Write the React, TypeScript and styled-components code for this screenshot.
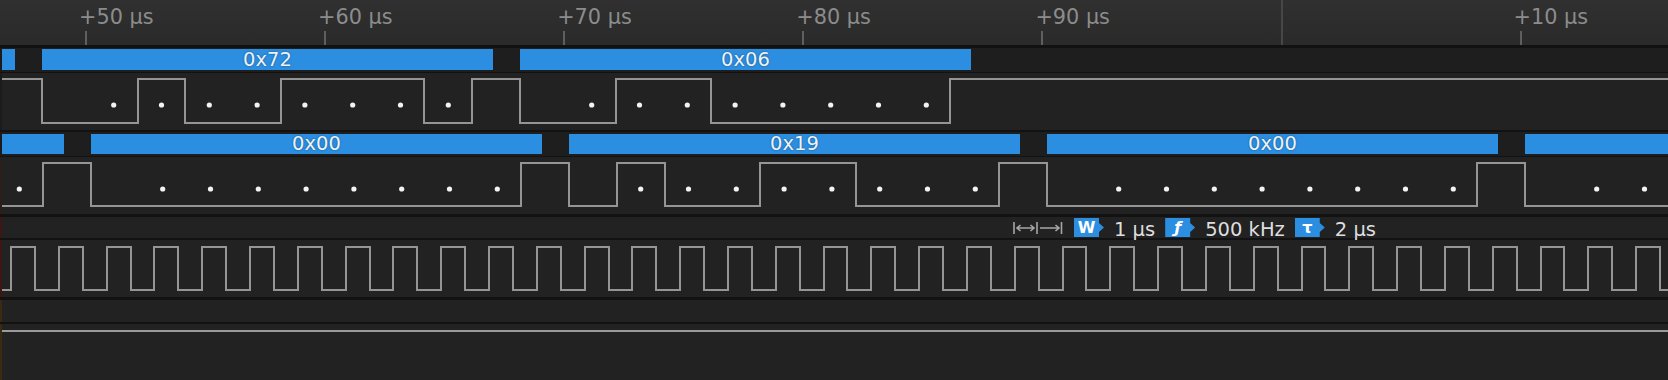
import styled, { createGlobalStyle } from "styled-components";

const WIDTH = 1668;
const BIT = 47.8; // one bit / one clock period in px (2 µs)
const FRAME = BIT * 10; // start + 8 data + stop
const TICK0 = 86;
const TICK_STEP = 239.1;

const GlobalStyle = createGlobalStyle`
  html, body {
    margin: 0;
    padding: 0;
    background: #222;
  }
  body {
    font-family: "DejaVu Sans", "Liberation Sans", sans-serif;
    overflow: hidden;
  }
`;

const Screen = styled.div`
  width: 1668px;
  height: 380px;
  display: flex;
  flex-direction: column;
  background: #222;
  overflow: hidden;
`;

const Ruler = styled.div`
  position: relative;
  flex: none;
  height: 45px;
  background: linear-gradient(#303030, #2a2a2a);
  border-bottom: 3px solid #111;
`;

const Tick = styled.div<{ $major?: boolean }>`
  position: absolute;
  bottom: 0;
  width: 2px;
  margin-left: -1px;
  height: ${(p) => (p.$major ? "45px" : "14px")};
  background: ${(p) => (p.$major ? "#474747" : "#5f5f5f")};
`;

const TickLabel = styled.span`
  position: absolute;
  top: 7px;
  font-size: 20.8px;
  line-height: 21px;
  color: #8c8c8c;
  white-space: nowrap;
`;

const Lane = styled.div<{ $height: number; $rule?: number; $strip?: string; $tone?: string }>`
  position: relative;
  flex: none;
  height: ${(p) => p.$height}px;
  background: ${(p) => p.$tone ?? "#222"};
  border-bottom: ${(p) => p.$rule ?? 0}px solid #121212;
  overflow: visible;

  &::before {
    content: "";
    position: absolute;
    left: 0;
    top: 0;
    bottom: 0;
    width: 2px;
    background: ${(p) => p.$strip ?? "#1b1b1b"};
    z-index: 3;
  }
`;

const TailLane = styled(Lane)`
  flex: 1;
`;

const Segment = styled.div<{ $top: number; $h: number }>`
  position: absolute;
  top: ${(p) => p.$top}px;
  height: ${(p) => p.$h}px;
  background: #2b8ee0;
  color: #eef3f8;
  font-size: 19.5px;
  line-height: ${(p) => p.$h}px;
  text-align: center;
  text-shadow: 0 0 2px rgba(0, 0, 0, 0.45);
  white-space: nowrap;
`;

const Trace = styled.svg`
  display: block;
  overflow: visible;
`;

const Note = styled.div`
  position: absolute;
  top: 1px;
  display: flex;
  align-items: flex-start;
  gap: 10px;
  z-index: 2;
`;

const Badge = styled.span<{ $italic?: boolean }>`
  display: inline-flex;
  justify-content: center;
  align-items: center;
  box-sizing: border-box;
  width: 30px;
  height: 19px;
  padding-right: 5px;
  background: #2b8ee0;
  color: #fff;
  font-size: 16px;
  font-weight: bold;
  font-style: ${(p) => (p.$italic ? "italic" : "normal")};
  line-height: 19px;
  clip-path: polygon(0 0, 25px 0, 25px 5px, 30px 9.5px, 25px 14px, 25px 100%, 0 100%);
`;

const Reading = styled.span`
  margin-top: 2px;
  font-size: 19.5px;
  line-height: 19px;
  color: #dedede;
  white-space: nowrap;
`;

const MeasureIcon = styled.svg`
  margin-top: 3px;
  margin-right: 1px;
  display: block;
`;

type Frame = { start: number; value: number };

const laneA: Frame[] = [
  { start: 42 - FRAME, value: 0xff },
  { start: 42, value: 0x72 },
  { start: 42 + FRAME, value: 0x06 },
];

const laneB: Frame[] = [
  { start: 91 - FRAME, value: 0x00 },
  { start: 91, value: 0x00 },
  { start: 91 + FRAME, value: 0x19 },
  { start: 91 + FRAME * 2, value: 0x00 },
  { start: 91 + FRAME * 3, value: 0x00 },
];

const SEG_LEN = 451;

const hex = (v: number) => "0x" + v.toString(16).padStart(2, "0");

function uartPath(frames: Frame[], hi: number, lo: number) {
  const steps: [number, number][] = [];
  frames.forEach((f) => {
    const bits = [0, ...Array.from({ length: 8 }, (_, i) => (f.value >> i) & 1), 1];
    bits.forEach((b, i) => steps.push([f.start + i * BIT, b]));
  });
  let level = steps[0][1];
  let d = `M${Math.round(steps[0][0])} ${level ? hi : lo}`;
  steps.forEach(([x, b]) => {
    if (b !== level) {
      d += ` H${Math.round(x)} V${b ? hi : lo}`;
      level = b;
    }
  });
  return d + ` H${WIDTH}`;
}

function clockPath(first: number, hi: number, lo: number) {
  let d = `M0 ${lo}`;
  for (let x = first; x < WIDTH; x += BIT) {
    d += ` H${Math.round(x)} V${hi} H${Math.round(x + BIT / 2)} V${lo}`;
  }
  return d + ` H${WIDTH}`;
}

function samplePoints(frames: Frame[]) {
  return frames
    .flatMap((f) => Array.from({ length: 8 }, (_, i) => f.start + (1.5 + i) * BIT))
    .filter((x) => x > 0 && x < WIDTH);
}

// label only shown when the whole decoded frame is on screen
const visible = (f: Frame) => f.start > 0 && f.start + SEG_LEN < WIDTH;

function BusLane({ frames, top, h, height }: { frames: Frame[]; top: number; h: number; height: number }) {
  return (
    <Lane $height={height} $rule={1} $tone="#1e1e1e">
      {frames.map((f) => (
        <Segment key={f.start} $top={top} $h={h} style={{ left: f.start, width: SEG_LEN }}>
          {visible(f) ? hex(f.value) : null}
        </Segment>
      ))}
    </Lane>
  );
}

function SignalLane({ frames, hi, lo, rule, strip }: { frames: Frame[]; hi: number; lo: number; rule: number; strip?: string }) {
  return (
    <Lane $height={57} $rule={rule} $strip={strip}>
      <Trace width={WIDTH} height={57}>
        <path d={uartPath(frames, hi, lo)} fill="none" stroke="#959595" strokeWidth={2} />
        {samplePoints(frames).map((x) => (
          <circle key={x} cx={x} cy={32} r={2.6} fill="#f4f4f4" />
        ))}
      </Trace>
    </Lane>
  );
}

export default function App() {
  const ticks = ["+50 µs", "+60 µs", "+70 µs", "+80 µs", "+90 µs", "", "+10 µs"];
  return (
    <>
      <GlobalStyle />
      <Screen>
        <Ruler>
          {ticks.map((label, i) => {
            const x = TICK0 + i * TICK_STEP;
            return (
              <span key={i}>
                <Tick $major={!label} style={{ left: x }} />
                {label && <TickLabel style={{ left: x - 7 }}>{label}</TickLabel>}
              </span>
            );
          })}
        </Ruler>

        <BusLane frames={laneA} top={1} h={21} height={24} />
        <SignalLane frames={laneA} hi={6} lo={50} rule={2} />
        <BusLane frames={laneB} top={2} h={20} height={24} />
        <SignalLane frames={laneB} hi={6} lo={49} rule={3} strip="#2a1f1c" />

        <Lane $height={21} $rule={2} $strip="#3d1616">
          <Note style={{ left: 1013 }}>
            <MeasureIcon width={50} height={14} viewBox="0 0 50 14">
              <g stroke="#a6a6a6" strokeWidth={1.6} fill="none">
                <path d="M1 1V13M24 1V13M48.5 1V13" />
                <path d="M4 7H21M7.5 4L4 7L7.5 10M17.5 4L21 7L17.5 10" />
                <path d="M27 7H46M42.5 4L46 7L42.5 10" />
              </g>
            </MeasureIcon>
            <Badge>W</Badge>
            <Reading>1 µs</Reading>
            <Badge $italic>ƒ</Badge>
            <Reading>500 kHz</Reading>
            <Badge>τ</Badge>
            <Reading>2 µs</Reading>
          </Note>
        </Lane>

        <Lane $height={57} $rule={3} $strip="#3d1616">
          <Trace width={WIDTH} height={57}>
            <path d={clockPath(11, 7, 50)} fill="none" stroke="#959595" strokeWidth={2} />
          </Trace>
        </Lane>

        <Lane $height={22} $rule={2} $strip="#3a2a12" />

        <TailLane $height={56} $strip="#3a2a12">
          <Trace width={WIDTH} height={14}>
            <path d={`M0 7H${WIDTH}`} stroke="#9a9a9a" strokeWidth={2} />
          </Trace>
        </TailLane>
      </Screen>
    </>
  );
}
